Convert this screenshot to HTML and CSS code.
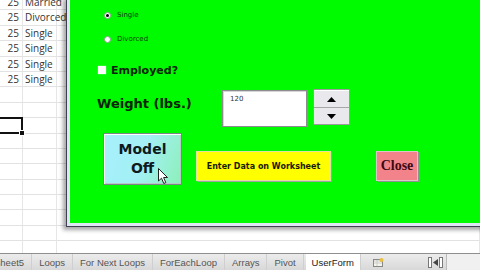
FILE: index.html
```html
<!DOCTYPE html>
<html>
<head>
<meta charset="utf-8">
<link rel="stylesheet" href="styles.css">
</head>
<body>
<div class="screen">
  <div class="sheet">
    <div class="row"><div class="cell num">25</div><div class="cell">Married</div><div class="cell"></div></div>
    <div class="row"><div class="cell num">25</div><div class="cell">Divorced</div><div class="cell"></div></div>
    <div class="row"><div class="cell num">25</div><div class="cell">Single</div><div class="cell"></div></div>
    <div class="row"><div class="cell num">25</div><div class="cell">Single</div><div class="cell"></div></div>
    <div class="row"><div class="cell num">25</div><div class="cell">Single</div><div class="cell"></div></div>
    <div class="row"><div class="cell num">25</div><div class="cell">Single</div><div class="cell"></div></div>
    <div class="row"><div class="cell"></div><div class="cell"></div><div class="cell"></div></div>
    <div class="row"><div class="cell"></div><div class="cell"></div><div class="cell"></div></div>
    <div class="row"><div class="cell selected"></div><div class="cell"></div><div class="cell"></div></div>
    <div class="row"><div class="cell"></div><div class="cell"></div><div class="cell"></div></div>
    <div class="row"><div class="cell"></div><div class="cell"></div><div class="cell"></div></div>
    <div class="row"><div class="cell"></div><div class="cell"></div><div class="cell"></div></div>
    <div class="row"><div class="cell"></div><div class="cell"></div><div class="cell"></div></div>
    <div class="row"><div class="cell"></div><div class="cell"></div><div class="cell"></div></div>
    <div class="row"><div class="cell"></div><div class="cell"></div><div class="cell"></div></div>
    <div class="row"><div class="cell"></div><div class="cell"></div><div class="cell"></div></div>
    <div class="row"><div class="cell"></div><div class="cell"></div><div class="cell"></div></div>
  </div>

  <div class="form">
    <div class="panel">
      <div class="radios">
        <div class="radio-row"><span class="radio on"></span><span>Single</span></div>
        <div class="radio-row"><span class="radio"></span><span>Divorced</span></div>
      </div>
      <div class="check-row"><span class="checkbox"></span><span>Employed?</span></div>
      <div class="weight-row">
        <div class="weight-label">Weight (lbs.)</div>
        <div class="textbox">120</div>
        <div class="spin">
          <div class="spin-btn"><svg width="9" height="5" viewBox="0 0 9 5"><path d="M0 5 L4.5 0 L9 5 Z" fill="#000"/></svg></div>
          <div class="spin-btn lower"><svg width="9" height="5" viewBox="0 0 9 5"><path d="M0 0 L9 0 L4.5 5 Z" fill="#000"/></svg></div>
        </div>
      </div>
      <div class="button-row">
        <div class="model-btn">
          <span>Model</span><span>Off</span>
          <svg class="cursor" width="11" height="17" viewBox="0 0 11 17"><path d="M0.5 0.5 L0.5 13 L3.5 10.2 L5.8 15.5 L7.8 14.6 L5.6 9.5 L9.5 9.5 Z" fill="#fff" stroke="#222" stroke-width="1"/></svg>
        </div>
        <div class="yellow-btn">Enter Data on Worksheet</div>
        <div class="close-btn">Close</div>
      </div>
    </div>
  </div>

  <div class="tabs">
    <div class="tab first">Sheet5</div>
    <div class="tab">Loops</div>
    <div class="tab">For Next Loops</div>
    <div class="tab">ForEachLoop</div>
    <div class="tab">Arrays</div>
    <div class="tab">Pivot</div>
    <div class="tab active">UserForm</div>
    <div class="new-sheet"><svg width="11" height="9" viewBox="0 0 11 9"><rect x="0.5" y="1.5" width="9" height="7" fill="#f4f4ec" stroke="#888"/><path d="M1 3 H9 M1 5 H9 M4 2 V8" stroke="#bbb" stroke-width="0.6"/><circle cx="8.5" cy="2" r="2" fill="#e8c040"/></svg></div>
    <div class="tab-spacer"></div>
    <div class="nav"><span class="nav-bar"></span><svg width="5" height="7" viewBox="0 0 5 7"><path d="M5 0 L0 3.5 L5 7 Z" fill="#444"/></svg><span class="nav-bar"></span></div>
    <div class="hscroll"></div>
  </div>
</div>
</body>
</html>
```

FILE: styles.css
```css
html, body {
  margin: 0;
  padding: 0;
  background: #fff;
}

.screen {
  position: relative;
  width: 480px;
  height: 270px;
  overflow: hidden;
  display: flex;
  flex-direction: column;
  background: #fff;
}

.sheet {
  height: 253px;
  overflow: hidden;
  font-family: "Open Sans", "Liberation Sans", sans-serif;
  font-size: 10px;
  color: #333;
}

.sheet .row:first-child {
  margin-top: -5px;
}

.row {
  display: grid;
  grid-template-columns: 23px 34px 1fr;
  height: 15.4px;
}

.cell {
  box-sizing: border-box;
  border-right: 1px solid #e6e6e6;
  border-bottom: 1px solid #e2e2e2;
  line-height: 14px;
  padding-left: 2px;
  white-space: nowrap;
  overflow: visible;
  position: relative;
}

.cell.num {
  text-align: right;
  padding-right: 3px;
  padding-left: 0;
}

.cell.selected::after {
  content: "";
  position: absolute;
  left: -3px;
  right: -1px;
  top: -1px;
  bottom: -1px;
  border: 2px solid #111;
}

.cell.selected::before {
  content: "";
  position: absolute;
  right: -3px;
  bottom: -3px;
  width: 4px;
  height: 4px;
  background: #111;
  border: 1px solid #fff;
  z-index: 1;
}

/* user form window */
.form {
  position: absolute;
  left: 66px;
  top: -4px;
  width: 440px;
  border: 1px solid #3e4250;
  padding: 3px;
  background: #dfe6f3;
  box-shadow: -3px 3px 4px rgba(0, 0, 0, 0.35);
}

.panel {
  height: 223px;
  background: #00fa00;
  display: flex;
  flex-direction: column;
  font-family: "DejaVu Sans", sans-serif;
  color: #0b230b;
}

.radios {
  display: flex;
  flex-direction: column;
  gap: 14px;
  margin: 10px 0 0 34px;
}

.radio-row {
  display: flex;
  align-items: center;
  gap: 6px;
  height: 10px;
  font-size: 7px;
  color: #0f3d0f;
}

.radio {
  width: 7px;
  height: 7px;
  border-radius: 50%;
  background: #fff;
  border: 1px solid #8fa08f;
  box-sizing: border-box;
  display: flex;
  align-items: center;
  justify-content: center;
}

.radio.on::after {
  content: "";
  width: 3px;
  height: 3px;
  border-radius: 50%;
  background: #000;
}

.check-row {
  display: flex;
  align-items: center;
  gap: 5px;
  margin: 20px 0 0 28px;
  height: 12px;
  font-size: 11px;
  font-weight: bold;
}

.checkbox {
  width: 8px;
  height: 8px;
  background: #fff;
  box-shadow: 0 0 1px #cfe;
}

.weight-row {
  display: flex;
  align-items: flex-start;
  margin-top: 13px;
  height: 38px;
}

.weight-label {
  width: 125px;
  margin: 7px 0 0 27px;
  font-size: 13px;
  line-height: 16px;
  font-weight: bold;
  white-space: nowrap;
}

.textbox {
  width: 85px;
  height: 37px;
  margin-top: 1px;
  box-sizing: border-box;
  background: #fff;
  border: 1px solid #8c8c8c;
  box-shadow: inset 1px 1px 0 #d6d6d6;
  font-size: 7px;
  line-height: 9px;
  color: #333;
  padding: 4px 0 0 7px;
}

.spin {
  margin-left: 6px;
  width: 37px;
  height: 36px;
  display: flex;
  flex-direction: column;
  box-sizing: border-box;
  border: 1px solid #9a9a9a;
  background: #e8e8ed;
}

.spin-btn {
  flex: 1;
  display: flex;
  align-items: center;
  justify-content: center;
  border-top: 1px solid #fff;
}

.spin-btn.lower {
  border-top: 1px solid #a6a6a6;
}

.button-row {
  display: flex;
  align-items: flex-start;
  margin-top: 6px;
}

.model-btn {
  position: relative;
  margin-left: 33px;
  width: 79px;
  height: 52px;
  box-sizing: border-box;
  border: 1px solid #7a8686;
  box-shadow: inset 1px 1px 0 #fff, inset -1px -1px 0 #b8c8c8;
  background: linear-gradient(110deg, #a6f0fb 0%, #a4f0f6 50%, #8cf0b8 100%);
  display: flex;
  flex-direction: column;
  align-items: center;
  justify-content: center;
  font-size: 14px;
  line-height: 19px;
  font-weight: bold;
  color: #0e1a1e;
}

.cursor {
  position: absolute;
  left: 54px;
  top: 34px;
}

.yellow-btn {
  margin: 18px 0 0 14px;
  width: 135px;
  height: 30px;
  box-sizing: border-box;
  background: #ffff00;
  border: 1px solid #e0e0a0;
  box-shadow: 1px 1px 0 #a0a0a0;
  display: flex;
  align-items: center;
  justify-content: center;
  font-size: 8px;
  font-weight: bold;
  color: #1a1a00;
  white-space: nowrap;
}

.close-btn {
  margin: 18px 0 0 45px;
  width: 42px;
  height: 30px;
  box-sizing: border-box;
  background: #f3838a;
  border: 1px solid #d8c8c8;
  box-shadow: 1px 1px 0 #909090;
  display: flex;
  align-items: center;
  justify-content: center;
  font-family: "Liberation Serif", serif;
  font-size: 14px;
  font-weight: bold;
  color: #3d0a12;
}

/* sheet tabs */
.tabs {
  height: 17px;
  box-sizing: border-box;
  border-top: 1px solid #8e8e8e;
  background: linear-gradient(#ececec, #d8d8d8);
  display: flex;
  align-items: stretch;
  font-family: "Liberation Sans", sans-serif;
  font-size: 9.5px;
  color: #555;
  white-space: nowrap;
}

.tab {
  display: flex;
  align-items: center;
  padding: 0 7px;
  border-right: 1px solid #cfcfcf;
}

.tab.first {
  margin-left: -13px;
}

.tab.active {
  background: #fff;
  color: #1a1a1a;
  padding: 0 6px;
  margin-left: 2px;
}

.new-sheet {
  display: flex;
  align-items: center;
  padding: 0 10px 0 12px;
}

.tab-spacer {
  flex: 1;
}

.nav {
  display: flex;
  align-items: center;
  gap: 1px;
  padding: 0 3px;
}

.nav-bar {
  width: 2px;
  height: 9px;
  border: 1px solid #777;
  background: #fff;
}

.hscroll {
  width: 33px;
  background: #f0f0f0;
  border-left: 1px solid #bbb;
}
```
